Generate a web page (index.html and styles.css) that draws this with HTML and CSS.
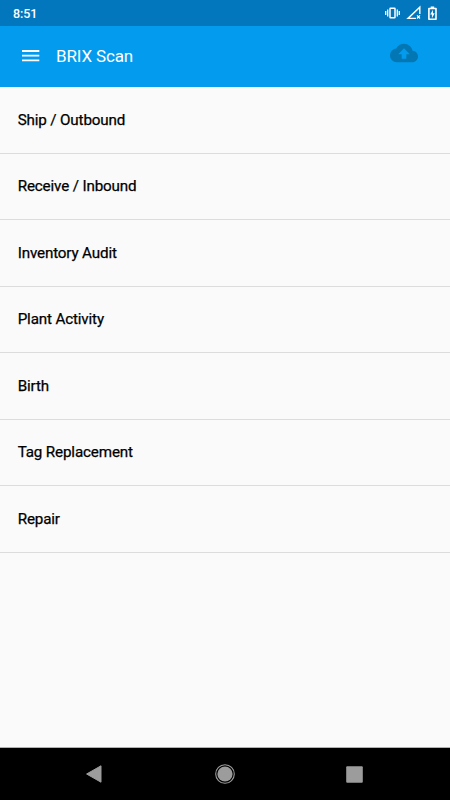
FILE: index.html
```html
<!DOCTYPE html>
<html lang="en">
<head>
<meta charset="utf-8">
<title>BRIX Scan</title>
<link rel="stylesheet" href="styles.css">
</head>
<body>
<div class="status">
  <span class="clock">8:51</span>
  <svg class="status-icons" width="56" height="16" viewBox="0 0 56 16" fill="none" stroke="#fff">
    <rect x="6" y="3.2" width="5" height="9.6" rx=".5" stroke-width="1.5"/>
    <path d="M3.7 4.5v7M1.7 6v4M13.3 4.5v7M15.3 6v4" stroke-width="1.3"/>
    <path d="M32 13.4H24L35.8 2.2V9" stroke-width="1.4"/>
    <path d="M33 10.3l3 3.2M36 10.3l-3 3.2" stroke-width="1.2"/>
    <path d="M44.9 3.5h7.1v10.8h-7.1z" stroke-width="1.6" stroke-linejoin="round"/>
    <path d="M46.7 1.4h3.5v1.8h-3.5zM49 4.8v3.4h1.7l-2.8 5V9.6h-1.7z" fill="#fff" stroke="none"/>
  </svg>
</div>
<header class="bar">
  <svg class="menu" width="18" height="12" viewBox="0 0 18 12" fill="#fff"><path d="M0 0h17.3v1.9H0zM0 4.7h17.3v1.9H0zM0 9.4h17.3v1.9H0z"/></svg>
  <h1 class="title">BRIX Scan</h1>
  <svg class="cloud" width="28" height="28" viewBox="0 0 24 24"><path d="M19.35 10.04C18.67 6.59 15.64 4 12 4 9.11 4 6.6 5.64 5.35 8.04 2.34 8.36 0 10.91 0 14c0 3.31 2.69 6 6 6h13c2.76 0 5-2.24 5-5 0-2.64-2.05-4.78-4.65-4.96zM14 13v4h-4v-4H7l5-5 5 5h-3z"/></svg>
</header>
<ul class="list">
  <li>Ship / Outbound</li>
  <li>Receive / Inbound</li>
  <li>Inventory Audit</li>
  <li>Plant Activity</li>
  <li>Birth</li>
  <li>Tag Replacement</li>
  <li>Repair</li>
</ul>
<nav class="nav">
  <svg width="16" height="18" viewBox="0 0 16 18"><path d="M.6 9L15 .8v16.4z" fill="#9c9c9c" stroke="#9c9c9c" stroke-linejoin="round"/></svg>
  <svg width="20" height="20" viewBox="0 0 20 20"><circle cx="10" cy="10" r="7.6" fill="#9c9c9c"/><circle cx="10" cy="10" r="9.3" fill="none" stroke="#9c9c9c" stroke-width="1.1"/></svg>
  <svg width="17" height="17" viewBox="0 0 17 17"><rect x=".2" y=".2" width="16.6" height="16.6" rx="1" fill="#9c9c9c"/></svg>
</nav>
</body>
</html>
```
FILE: styles.css
```css
* { box-sizing: border-box; }
body {
  margin: 0;
  height: 800px;
  display: flex;
  flex-direction: column;
  background: #fafafa;
  font-family: Roboto, "Liberation Sans", sans-serif;
  color: #000;
  overflow: hidden;
}
svg { display: block; flex: none; }
.status {
  height: 26px;
  flex: none;
  display: flex;
  align-items: center;
  justify-content: space-between;
  padding: 0 10px 0 13px;
  background: #0277bd;
  color: #fff;
}
.clock { font-size: 12.5px; font-weight: 500; letter-spacing: -0.1px; }
.bar {
  height: 61px;
  flex: none;
  display: flex;
  align-items: center;
  padding: 0 32px 0 22px;
  background: #039bee;
}
.menu { margin-bottom: 1px; }
.title {
  margin: 0 0 1px 16px;
  font-size: 17px;
  font-weight: 400;
  line-height: 24px;
  letter-spacing: -0.15px;
  color: #fff;
}
.cloud { margin: 0 0 8px auto; fill: #0277b3; }
.list {
  margin: 0;
  padding: 0;
  list-style: none;
  flex: 1;
}
.list li {
  height: 66.5px;
  padding-left: 17.7px;
  border-bottom: 1px solid #dcdcdc;
  font-size: 15.2px;
  line-height: 66.5px;
  letter-spacing: -0.15px;
  -webkit-text-stroke: 0.25px #000;
}
.list li:nth-child(even) { line-height: 65.5px; }
.nav {
  height: 53px;
  flex: none;
  display: flex;
  align-items: center;
  justify-content: space-between;
  padding: 0 87px 0 86px;
  border-top: 1px solid #b0b0b0;
  background: #000;
}
.nav svg:nth-child(2) { margin-left: 1px; }
```
